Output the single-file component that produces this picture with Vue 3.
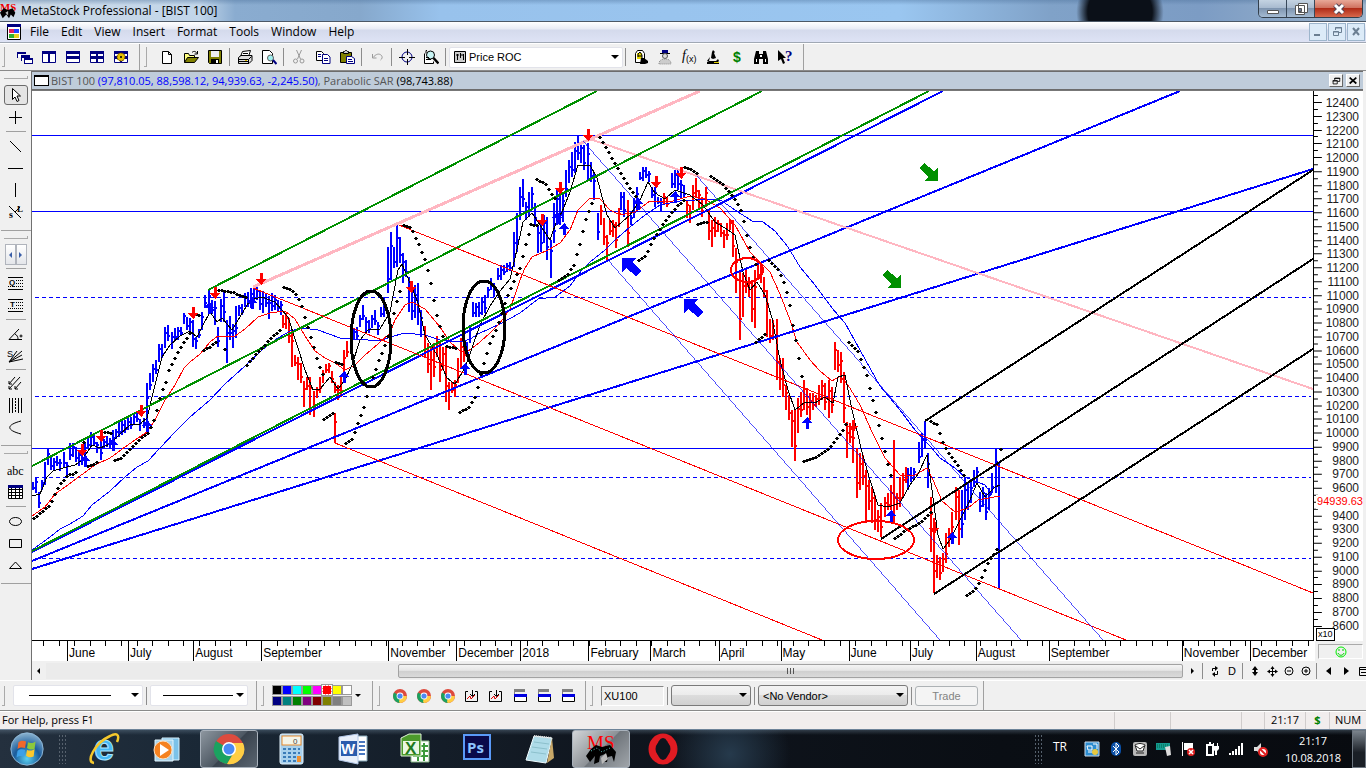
<script setup>
const menus = ['File', 'Edit', 'View', 'Insert', 'Format', 'Tools', 'Window', 'Help']

const win = (inner) => `<path fill="#fff" stroke="#000080" d="M1.5 2.5h13v11h-13z"/><path fill="#000080" d="M1 2h14v3H1z"/>${inner}`
const chrome = '<circle cx="8" cy="8" r="7" fill="#dd4b3e"/><path fill="#1aa260" d="M8 8 2 4.500A7 7 0 0 0 8 15z"/><path fill="#ffce44" d="M8 8h6.900A7 7 0 0 1 8 15l-1-1z"/><circle cx="8" cy="8" r="3.400" fill="#fff"/><circle cx="8" cy="8" r="2.600" fill="#4a8af4"/>'
const report = '<path fill="none" stroke="#000" d="M4 3.500H1.500v10h12v-10H11"/><path fill="none" stroke="#d00" d="m3 11 3-3 1 3 4-4"/><path stroke="#000" fill="none" d="M8.500 2v6M6 6l2.500 2.500L11 6"/>'
const layer = '<path fill="#808080" d="M2 1h11v3H2z"/><path fill="none" stroke="#808080" d="M2.500 3v5"/><path fill="#fff" stroke="#000" d="M2.500 6.500h12v7h-12z"/><path fill="#0000e0" d="M2 6h13v3H2z"/>'

const icons = {
  cascade: '<path fill="#000080" d="M0 3h9v2H0zM0 3h1v6H0zM4 6h9v3H4zM4 6h1v6H4zM7 9h9v6H7z"/><path fill="#fff" d="M8 11h7v3H8zM5 9h2v2H5zM1 5h3v3H1z"/>',
  cols: win('<path fill="#000080" d="M7 2h2v12H7z"/>'),
  rows: win('<path fill="#000080" d="M1 7h14v3H1z"/>'),
  tiles: win('<path fill="#000080" d="M7 2h2v12H7zM1 7h14v3H1z"/>'),
  gear: win('<path fill="#000080" d="M7 2h2v12H7zM1 7h14v3H1z"/><circle cx="8" cy="8" r="4" fill="#e8c000" stroke="#604000" stroke-dasharray="2 1"/><circle cx="8" cy="8" r="1" fill="#000"/>'),
  doc: '<path fill="#fff" stroke="#000" d="M3.500 2.500h6l3 3v9h-9zM9.500 2.500v3h3"/>',
  open: '<path fill="#ffff80" stroke="#000" d="M1.500 13.500v-9h4l1 2h5v2"/><path fill="#808000" stroke="#000" d="m1.500 13.500 3-5h11l-4 5z"/><path fill="none" stroke="#000" d="M9 3.500c2-2 4-1 5 1M14.500 2v3h-3"/>',
  save: '<path fill="#808000" stroke="#000" d="M1.500 1.500h13v13h-12l-1-1z"/><path fill="#eee" d="M4 2h8v6H4z"/><path fill="#000" d="M4 10h8v5H4z"/><path fill="#fff" d="M9 11h2v3H9z"/>',
  print: '<path fill="#fff" stroke="#000" d="m5.500 2.500 8-1-2 6h-8z"/><path stroke="#000" d="M6 4.500h5M5 6.500h5"/><path fill="#ddd" stroke="#000" d="M1.500 8.500 4 6.500h11v5l-3 3h-10.500z"/><path fill="none" stroke="#000" d="M1.500 10.500h10l3-3M11.500 10.500v4M2 12.500h9"/><path fill="#e0c000" d="M8 11h2v1H8z"/>',
  preview: '<path fill="#fff" stroke="#000" d="M1.500 1.500h7l3 3v10h-10z"/><circle cx="9.500" cy="9" r="3" fill="#a0f0f0" stroke="#606060"/><path stroke="#000080" stroke-width="2" d="m12 11 3.500 4"/>',
  cut: '<path fill="none" stroke="#999" d="m5.500 1 4 9M10.500 1l-4 9"/><circle cx="4.500" cy="12" r="2" fill="none" stroke="#999"/><circle cx="11" cy="12" r="2" fill="none" stroke="#999"/>',
  copy: '<path fill="#fff" stroke="#000" d="M1.500 2.500h5l2 2v7h-7z"/><path fill="#fff" stroke="#000080" d="M7.500 5.500h5l2.500 2.500v6.500H7.500z"/><path stroke="#000080" d="M9 9.500h4M9 11.500h4M3 5.500h3M3 7.500h3"/>',
  paste: '<path fill="#808000" stroke="#000" d="M1.500 3.500h11v10h-11z"/><path fill="#ccc" stroke="#000" d="M4.500 4.500v-2h1l1-1h1l1 1h1v2z"/><path fill="#fff" stroke="#000080" d="M7.500 7.500h5l3 2v5h-8z"/><path stroke="#000080" d="M9 10.500h4M9 12.500h5"/>',
  undo: '<path fill="none" stroke="#999" d="M3.500 5v4h4M4 8.500C7 5 10 4 12.500 6.500c1 1.500 1 3-1 4.500"/>',
  target: '<circle cx="8" cy="8" r="5" fill="none" stroke="#000080"/><path stroke="#000" stroke-width="1" d="M8.500 0v6M8.500 10v6M0 8.500h6M10 8.500h6"/>',
  zoomdoc: '<path fill="#fff" stroke="#000" d="M1.500 4.500v10h9v-2M4 1.500h-1v3"/><circle cx="7.500" cy="6" r="4" fill="#c8f4f4" stroke="#000"/><path stroke="#000" stroke-width="2.500" d="m10.500 9 5 5.500"/><path stroke="#000" d="M3 8.500h3M3 10.500h5"/>',
  expert: '<path fill="#fff" stroke="#000" d="M2.500 13.500v-9l2-3h5l2 3v9z"/><path fill="#e8d800" d="M4 4h5v6H4z"/><path fill="none" stroke="#000" d="M5 8V5l2-2 2 3v3M5 7h4"/><path fill="#000" d="M8 9h3l4 3v2l-3 1H7z"/>',
  advisor: '<path fill="#000080" d="M5 1h6v3H5z"/><path fill="#000" d="M3 4h10v1H3z"/><circle cx="8" cy="7" r="2.500" fill="#ddd" stroke="#555"/><path fill="#ccc" stroke="#888" stroke-dasharray="1 1" d="M2 15c0-4 3-5 6-5s6 1 6 5z"/>',
  fx: '<text x="1" y="11" font-family="Liberation Serif, serif" font-style="italic" font-size="14" fill="#000">f</text><text x="5" y="13" font-family="Liberation Sans, sans-serif" font-size="9" fill="#000">(x)</text>',
  scope: '<path fill="#000" d="m8 1 2 2-1 1 2 5-3 1-2-1 1-6zM5 8l-3 4h9l2-2 1 2-2 2h2v1H2v-2l2-1z"/><path fill="#e0d000" d="M9 13h5v1H9z"/>',
  dollar: '<text x="4" y="13" font-family="Liberation Sans, sans-serif" font-weight="bold" font-size="14" fill="#008000">$</text>',
  binoc: '<path fill="#000" d="M3 2h3v3h4V2h3l2 8v5h-5v-5H6v5H1v-5z"/><path fill="#fff" d="M3 10h1v3H3zM12 10h1v3h-1zM7 6h2v2H7z"/>',
  help: '<path fill="#000" d="m1 1 8 8H6l2 5-2 1-2-5-3 2z"/><text x="8" y="12" font-family="Liberation Serif, serif" font-weight="bold" font-size="15" fill="#000080">?</text>',
  pointer: '<path fill="#fff" stroke="#000" d="M5.500 1.500v11l2.500-2.500 2 4.500 2-1-2-4.500h3.500z"/>',
  cross: '<path stroke="#000" d="M8.500 2v13M2 8.500h13"/>',
  diag: '<path stroke="#000" d="m3 3 11 11"/>',
  hline: '<path stroke="#000" d="M1 8.500h15"/>',
  vline: '<path stroke="#000" d="M8.500 1v14"/>',
  sl: '<path stroke="#000" d="m2 2 12 12M13 3 8 8"/><text x="2" y="14" font-family="Liberation Serif, serif" font-weight="bold" font-size="10">s</text><text x="10" y="8" font-family="Liberation Serif, serif" font-weight="bold" font-size="9">L</text>',
  quad: '<path stroke="#000" d="M1 2.500h15M1 14.500h15"/><path stroke="#000" stroke-dasharray="1 1" d="M9 5.500h7M9 8.500h7M1 11.500h15"/><text x="2" y="10" font-family="Liberation Sans, sans-serif" font-weight="bold" font-size="8">Q</text>',
  tline: '<path stroke="#000" d="M1 2.500h15M1 14.500h15"/><path stroke="#000" stroke-dasharray="1 1" d="M9 5.500h7M9 8.500h7M1 11.500h15"/><text x="3" y="10" font-family="Liberation Sans, sans-serif" font-weight="bold" font-size="8">T</text>',
  angle: '<path fill="none" stroke="#000" d="M12 3 2 13.500h13M8 8c2 1 3 3 3 5"/><circle cx="14" cy="10" r="1" fill="none" stroke="#000"/>',
  fan: '<path fill="none" stroke="#000" d="M2 14 15 3M2 14l13-7M2 14l14-3M2 14l8-11"/><text x="0" y="9" font-family="Liberation Sans, sans-serif" font-size="9">S</text>',
  pitch: '<path fill="none" stroke="#000" d="m2 9 6-7M2 14 13 2M8 14l6-7"/><path fill="none" stroke="#000" d="M2 6v3h3M2 11v3h3M8 11v3h3"/>',
  bars: '<path stroke="#000" d="M2.500 1v15M5.500 1v15M11.500 1v15M14.500 1v15"/><path stroke="#000" stroke-dasharray="2 1" d="M8.500 1v15"/>',
  arc: '<path fill="none" stroke="#000" d="M14 2C-1 6-1 11 14 15"/>',
  abc: '<text x="0" y="13" font-family="Liberation Serif, serif" font-size="12">abc</text>',
  grid: '<path fill="#fff" stroke="#000" d="M1.500 1.500h14v13h-14zM1 5.500h15M1 8.500h15M1 11.500h15M4.500 2v13M8.500 2v13M12.500 2v13"/><path fill="#000080" d="M1 1h15v3H1z"/>',
  oval: '<ellipse cx="8.500" cy="8.500" rx="6" ry="4" fill="none" stroke="#000"/>',
  rect: '<path fill="none" stroke="#000" d="M2.500 4.500h12v8h-12z"/>',
  tri: '<path fill="none" stroke="#000" d="m8.500 5 6 6.500h-12z"/>',
  chrome, report, layer,
  refresh: '<path fill="none" stroke="#000" d="M5.500 8V5.500H9M10.500 8v3.500H7"/><path d="M8 3v5l3-3zM8 9v5l-3-3z"/>',
  day: '<text x="4" y="12" font-family="Liberation Sans, sans-serif" font-size="11">D</text>',
  updown: '<path d="m8 3 3 4H9v2h2l-3 4-3-4h2V7H5z"/>',
  move: '<path stroke="#000" d="M8.500 4v9M4 8.500h9"/><path d="M8.500 3l2 3h-4zM8.500 14l2-3h-4zM3 8.500l3-2v4zM14 8.500l-3-2v4z"/>',
  minus: '<circle cx="8" cy="8" r="4" fill="none" stroke="#000"/><path stroke="#000" d="M6 8h4"/>',
  plus: '<circle cx="8" cy="8" r="4" fill="none" stroke="#000"/><path stroke="#000" d="M6 8h4M8 6v4"/>',
  prev: '<path d="M10 4v8L5 8z"/>',
  next: '<path d="M6 4v8l5-4z"/>',
  pane: '<path fill="none" stroke="#000" d="M4.500 4.500h9v8h-9zM4 6.500h9M6 9.500h5"/>',
}

const toolbar = [
  ['print', 'preview'], ['cut', 'copy', 'paste'], ['undo'], ['target', 'zoomdoc'],
]
const analysis = ['expert', 'advisor', 'fx', 'scope', 'dollar', 'binoc', 'help']
const swatches = ['#000', '#00f', '#0ff', '#0f0', '#f0f', '#f00', '#ff0', '#fff', '#000080', '#008080', '#008000', '#800080', '#800000', '#808000', '#808080', '#c0c0c0']
const macros = ['chrome', 'chrome', 'chrome', 'report', 'report', 'layer', 'layer', 'layer']

const prices = Array.from({ length: 39 }, (_, i) => 12400 - i * 100)
const priceTop = 102
const priceStep = 1375 / 100
const months = [
  ['', 35], ['June', 61], ['July', 65], ['August', 68], ['September', 127], ['November', 68], ['December', 64], ['2018', 68],
  ['February', 62], ['March', 68], ['April', 62], ['May', 68], ['June', 61], ['July', 66], ['August', 73], ['September', 133], ['November', 68], ['December', 65],
]
const weekTicks = Array.from({ length: 82 }, (_, i) => 43 + Math.round(i * 15.6)).filter((x) => x < 1313)

const levels = [135, 211, 448]
const dashed = [297, 396, 477, 558]
const trends = [
  ['#00f', 2, 32, 552, 943, 91], ['#00f', 2, 32, 561, 1180, 91], ['#00f', 2, 32, 569, 1313, 169],
  ['#ffb6c1', 3, 253, 287, 700, 91], ['#ffb6c1', 2, 590, 139, 1313, 389],
  ['#009000', 2, 208, 290, 597, 91], ['#009000', 2, 32, 466, 762, 91], ['#009000', 2, 32, 551, 929, 91],
  ['#f00', 1, 253, 288, 1126, 640], ['#f00', 1, 399, 225, 1313, 593], ['#f00', 1, 335, 443, 822, 640],
  ['#00f', 0.7, 583, 141, 1021, 640], ['#00f', 0.7, 608, 260, 940, 640], ['#00f', 0.7, 697, 176, 1103, 640],
  ['#000', 2, 925, 421, 1313, 170], ['#000', 2, 881, 539, 1313, 259], ['#000', 2, 934, 594, 1313, 349],
]

const longAvg = '32,550 50,537 60,529 70,524 83,516 92,505 110,491 125,477 137,467 148,461 160,448 175,432 190,417 210,400 225,384 245,366 262,350 275,340 290,331 302,328 318,330 340,338 355,339 380,341 390,337 405,333 425,335 440,340 460,342 470,339 480,333 500,324 520,313 538,299 555,297 570,286 582,270 590,262 605,250 615,240 630,227 645,215 660,205 680,201 710,199 722,201 735,210 752,221 763,222 775,231 788,247 800,267 815,285 832,308 845,323 860,350 880,386 900,410 915,430 930,446 940,458 955,468 965,477 985,485 992,495'
const midAvg = '32,516 45,507 55,494 65,487 80,476 95,465 110,458 125,447 135,440 147,432 155,420 165,400 175,385 184,368 190,362 200,354 210,342 218,336 235,336 245,329 258,317 270,313 285,311 295,319 305,336 315,351 325,358 335,363 345,370 355,365 365,355 378,344 390,333 395,320 405,305 412,302 425,309 440,327 450,342 460,351 467,352 480,342 490,333 500,323 510,309 515,295 520,280 525,268 532,257 548,250 560,243 570,230 578,210 590,198 600,199 610,210 620,215 635,212 650,201 670,202 690,196 705,199 720,208 735,225 750,252 760,262 770,272 780,294 790,320 797,342 810,360 820,371 832,381 840,376 848,385 860,405 872,432 885,458 900,475 915,475 927,468 933,480 942,501 955,512 968,508 978,500 1000,496'
const shortAvg = '32,496 40,494 47,477 53,471 63,468 75,465 82,460 92,445 100,448 110,444 120,434 130,425 140,424 147,418 155,385 162,357 170,345 180,336 190,331 197,337 203,325 210,312 217,322 222,318 232,330 240,317 250,300 262,297 275,302 288,317 297,345 305,370 313,390 320,389 330,377 338,389 345,380 352,365 360,340 368,330 380,329 390,312 398,270 402,264 410,283 418,303 425,335 437,355 447,378 455,384 465,368 480,325 490,306 500,291 510,279 518,245 523,222 532,213 540,225 550,240 557,220 562,212 570,192 578,165 590,165 597,178 607,215 615,228 622,222 630,215 640,200 648,182 655,193 665,199 675,190 690,195 703,205 715,222 728,230 735,235 743,272 750,290 757,282 765,295 772,318 780,360 788,390 795,410 805,402 815,403 825,397 833,403 838,377 845,375 852,410 862,452 870,480 878,505 888,507 900,503 910,485 918,474 927,455 932,490 938,535 943,549 950,540 960,520 970,500 977,483 985,497 995,487 1000,485'

const upBars = `33,482,490 36,477,493 39,492,508 42,480,490 45,462,485 48,449,465 51,457,470 54,458,470 57,456,466 60,459,471 64,452,467 67,462,475 70,443,460 73,443,457 76,447,462 79,450,466 82,447,465 85,443,458 88,437,448 91,432,447 94,435,446 97,442,453 101,436,460 104,439,449 107,436,447 110,438,448 113,430,442 116,429,439 119,420,437 122,421,435 125,420,433 128,418,430 131,417,429 134,413,425 137,412,422 140,419,431 144,418,428 147,383,432 150,373,390 153,364,382 156,360,374 159,344,362 162,344,358 165,327,348 168,325,341 172,332,349 175,328,341 178,327,340 181,327,336 184,313,324 187,317,330 190,318,332 193,320,347 196,337,349 199,329,338 202,312,330 205,295,307 209,290,310 212,300,314 215,301,325 218,327,347 221,299,322 224,290,322 227,320,363 230,316,340 233,324,348 236,306,338 239,305,316 242,304,315 245,293,307 248,292,307 251,288,308 254,287,302 257,287,300 260,291,310 263,291,313 266,293,307 269,296,319 272,293,311 275,295,310 278,300,312 281,301,315
351,333,347 354,328,340 357,327,340 360,315,327 363,305,320 366,317,332 369,320,333 372,315,328 375,310,325 378,322,335 381,307,317 384,297,317 388,247,293 391,232,280 394,247,268 397,225,267 400,237,263 403,253,283 406,260,277 409,277,312 412,290,320 415,285,318 418,283,325 421,310,337
467,342,357 470,325,343 473,302,317 476,303,317 479,302,317 482,297,315 485,295,313 488,287,298 491,278,290 494,283,297 498,268,280 501,265,280 504,265,275 507,263,272 510,262,271 514,232,267 517,213,252 520,187,220 523,179,207 526,202,220 529,192,217 532,187,210 535,203,225 538,225,253 541,223,252 544,215,243 547,217,260 551,240,278 554,203,243 557,188,225 560,193,225 563,192,222 566,170,197 569,160,183 572,152,177 575,142,173 578,136,160 581,142,163 584,145,170 588,143,180 591,162,182 594,173,200 598,213,240 621,192,210 624,192,217 631,215,225 634,198,218 637,187,210 640,172,180 643,167,181 646,167,178 649,171,182 652,187,198 655,187,207 658,197,204 661,198,212 672,173,188 675,170,188 678,170,190 681,180,198 684,185,198
908,468,490 911,467,482 914,468,480 919,442,463 922,433,457 925,421,448 928,453,488 962,490,538 965,477,520 968,483,510 971,482,503 974,470,487 977,467,485 980,492,512 983,487,507 986,493,520 989,488,510 992,473,493 996,449,493 999,463,588`
const downBars = `283,315,328 286,313,329 289,318,343 292,330,367 295,355,366 298,357,380 301,363,383 304,381,407 307,377,390 310,377,415 314,391,417 317,387,398 320,377,393 323,370,383 326,364,373 329,363,373 332,371,383 335,413,443 335,382,393 338,385,400 341,377,397 344,350,377 347,341,357 425,326,358 428,343,373 431,347,390 434,343,377 437,336,357 440,342,382 443,347,370 446,347,402 449,382,410 452,382,393 455,380,397 458,358,383 461,338,368 464,340,362 601,205,225 604,218,245 607,235,262 610,220,235 613,220,237 616,222,248 619,208,227 628,200,247 664,193,205 667,197,207 687,200,218 690,205,223 693,185,210 696,178,197 699,190,208 702,197,217 706,187,207 709,210,240 712,220,247 715,217,237 718,220,232 721,223,237 724,230,248 727,223,240 730,220,230 733,220,257 736,248,293 740,270,340 743,273,317 746,270,293 749,277,297 752,280,322 755,270,328 758,262,280 761,262,283 764,277,297 767,290,337 770,319,343 773,320,340 777,319,380 780,358,390 783,358,397 786,385,410 789,395,420 792,410,447 795,410,461 798,398,433 801,392,417 804,380,410 807,388,415 810,393,420 813,393,410 816,395,407 819,385,405 822,380,400 825,383,410 829,380,418 832,387,413 835,342,370 838,350,372 841,352,383 844,372,423 847,422,458 850,423,443 853,427,463 857,448,498 860,453,490 863,455,485 866,470,522 869,480,510 872,487,523 875,495,530 878,510,532 881,503,537 885,497,517 888,493,510 891,485,510 894,440,523 897,493,510 900,477,507 903,473,497 906,467,483 931,497,552 934,518,593 937,555,578 940,557,580 943,553,572 946,533,563 949,528,547 952,512,533 956,487,520 959,490,545`
const barPath = (text) => text.trim().split(/\s+/).map((bar, i) => {
  const [x, top, bottom] = bar.split(',').map(Number)
  const close = Math.round(top + (bottom - top) * (i % 2 ? 0.3 : 0.7))
  return `M${x} ${top}V${bottom}M${x} ${close}h2`
}).join('')
const upPath = barPath(upBars)
const downPath = barPath(downBars)

const sarRuns = [
  '33,518 42,511 49,505 55,492 60,483 68,474 73,474 77,469', '83,442 84,442', '87,466 92,465 98,461', '104,432 112,433',
  '114,460 120,458 130,448 140,438 148,432 154,418 160,394 166,379 168,370 173,360 178,350 185,339 190,332', '195,314 200,315', '203,350 210,346 216,341', '224,349 225,349',
  '218,290 232,292 245,297', '246,365 255,354 262,347 270,338 281,328', '283,287 290,289 296,295 300,303 305,320 311,340 318,365 322,374', '323,419 333,412', '335,362 343,365',
  '345,443 352,438 358,420 364,404 367,392 372,377 378,360 386,340 390,325 395,305 400,287', '403,225 410,227 418,244 424,259 429,277 435,312 442,336', '446,346 455,348 457,360',
  '459,412 468,407 475,395 482,366 489,343 497,325 505,300 512,283 519,268 526,240 528,234', '530,224 536,225', '536,179 545,184 555,200',
  '558,280 566,275 573,265 580,240 584,222 590,205 593,198', '599,137 607,150 615,165 622,176 630,190 637,198', '638,260 645,255 652,240 660,227 668,216 677,205 683,200', '684,167 692,170 697,174', '697,224 708,221',
  '710,176 722,184 735,200 741,212 747,240 751,254 755,264', '755,342 765,333', '768,260 778,270 784,284 789,305 792,325 796,345 800,370 803,388',
  '803,461 815,457 828,448 837,437 843,428 846,422', '848,342 857,351 866,375 872,400 877,420 882,443 888,468 892,481', '894,538 905,530 920,522 930,512',
  '930,421 936,424 943,445 950,456 958,466 964,477', '966,595 974,590 981,577 987,563 992,555 998,546', '1000,449 1001,449',
]
const sarPath = sarRuns.map((run) => {
  const pts = run.split(' ').map((p) => p.split(',').map(Number))
  let out = ''
  for (let x = pts[0][0], k = 0; x <= pts[pts.length - 1][0]; x += 3) {
    while (k < pts.length - 2 && pts[k + 1][0] < x) k++
    const [[ax, ay], [bx, by]] = [pts[k], pts[k + 1]]
    const y = Math.round(ay + ((by - ay) * (x - ax)) / (bx - ax))
    out += `M${x - 1} ${y}h4v1h-4zM${x} ${y - 1}h2v3h-2z`
  }
  return out
}).join('')

const sells = [[193, 313], [215, 293], [82, 450], [101, 436], [141, 411], [261, 279], [411, 287], [542, 220], [560, 188], [588, 135], [656, 182], [681, 173], [853, 426], [934, 528]]
const buys = [[85, 461], [113, 445], [147, 426], [209, 308], [252, 303], [344, 377], [465, 369], [564, 229], [557, 218], [638, 204], [675, 197], [807, 423], [891, 516], [952, 538]]
const signs = [['#00f', 631, 267, 0], ['#00f', 693, 308, 0], ['#009000', 929, 172, 180], ['#009000', 892, 279, 180]]
const loops = [['#000', 3, 371, 339, 20, 48], ['#000', 3, 484, 327, 21, 46], ['#f00', 2, 747, 270, 16, 12], ['#f00', 2, 876, 540, 38, 19]]

const tasks = [
  { name: 'Internet Explorer', art: '<text x="5" y="27" font-family="Liberation Sans, sans-serif" font-weight="bold" font-size="36" fill="#47b8f5" stroke="#a8e4ff">e</text><path fill="none" stroke="#f6c82c" stroke-width="2.500" d="M5 30C-4 29 6 10 21 3c7-4 10-1 7 6"/>' },
  { name: 'Media Player', art: '<path fill="#7cc2e8" stroke="#d8f0fc" d="M11 5h17v22H11z"/><path fill="#a4d4ee" stroke="#e4f5fd" d="M4 7h18v21H4z"/><circle cx="12" cy="17" r="9" fill="#f58220" stroke="#fde0c0"/><path fill="#fff" d="m9 11 9 6-9 6z"/>' },
  { name: 'Chrome', active: true, art: '<circle cx="16" cy="16" r="15" fill="#dd4b3e"/><path fill="#1aa260" d="M16 16 3 8a15 15 0 0 0 11 23l6-10z"/><path fill="#ffce44" d="M16 10h14a15 15 0 0 1-16 21l6-10z"/><circle cx="16" cy="16" r="7" fill="#fff"/><circle cx="16" cy="16" r="5.500" fill="#4a8af4"/>' },
  { name: 'Calculator', art: '<rect x="5" y="1" width="23" height="30" rx="2" fill="#a8d0ec" stroke="#e4f4ff"/><rect x="7" y="3" width="19" height="9" fill="#f4f4e8" stroke="#e88a2c"/><text x="18" y="11" font-family="Liberation Sans, sans-serif" font-size="8" fill="#444">0</text><path stroke="#3b7cb8" stroke-width="2" stroke-dasharray="3 2" d="M8 16h17M8 20h17M8 24h17M8 28h17"/><path fill="#f09030" d="M22 23h4v6h-4z"/>' },
  { name: 'Word', art: '<path fill="#fff" stroke="#8ab" d="M12 3h18v25H12z"/><path stroke="#4a78c0" stroke-width="2" d="M22 9h6M22 13h6M22 17h6M22 21h6"/><path fill="#e8effa" stroke="#b4c8e8" d="m2 4 19-3v30L2 27z"/><path fill="#2b5cad" d="M4 8h16v15H4z"/><text x="4" y="21" font-family="Liberation Sans, sans-serif" font-weight="bold" font-size="15" fill="#fff">W</text>' },
  { name: 'Excel', art: '<path fill="#fff" stroke="#8b8" d="M12 8h18v21H12z"/><path fill="none" stroke="#3c9a3c" stroke-width="2" d="M14 13h15M14 18h15M14 23h15M19 10v18M25 10v18"/><path fill="#4c9a2c" stroke="#e0f4d8" d="M2 5 10 1h12v22H2z"/><path fill="#e9f7e2" d="M4 8h16v13H4z"/><text x="6" y="21" font-family="Liberation Sans, sans-serif" font-weight="bold" font-size="17" fill="#1f7a1f">X</text>' },
  { name: 'Photoshop', art: '<path fill="#0a0a4a" stroke="#5a9af8" stroke-width="2" d="M3 2h26v24H3z"/><text x="6" y="20" font-family="Open Sans, sans-serif" font-weight="bold" font-size="15" fill="#8cc4ff">Ps</text>' },
  { name: 'Notepad', art: '<path fill="#aedbe8" stroke="#f0fcff" d="m11 3 18 2-6 25-20-3z"/><path stroke="#8cc0cc" d="m11 9 15 2M9 14l15 2M8 19l15 2"/><path fill="#c8a868" d="m29 5 2 20-7 5z"/><path stroke="#ddd" stroke-width="2" stroke-dasharray="1 1" d="m11 3 18 2"/>' },
  { name: 'MetaStock', active: true, art: '<text x="2" y="16" font-family="Liberation Serif, serif" font-size="19" fill="#f00">MS</text><path fill="#000" d="m1 23 5-7 5-4 6 2 8-2 6 7-2 10-2-6-4 1-1 5h-4l2-8-5 2-1 6-5 2 1-8-5 6z"/><path fill="#bbb" d="m16 25 5-5 2 6-6 5z"/><path fill="none" stroke="#6cc" stroke-dasharray="1 2" d="m6 18 6-3 5 4 8-4"/>' },
  { name: 'Opera', art: '<ellipse cx="16" cy="16" rx="11" ry="12" fill="none" stroke="#e01b22" stroke-width="7"/><ellipse cx="16" cy="16" rx="6" ry="11" fill="#0e141d"/>' },
]
const tray = [
  '<path fill="#2c8cd0" stroke="#cde" d="M1 1h14v14H1z"/><path fill="none" stroke="#fff" d="M3 5h5v4H4zM9 3h4v5M4 11h6"/><circle cx="11" cy="11" r="3" fill="#e8c840"/>',
  '<rect x="3" y="1" width="10" height="14" rx="5" fill="#0a50a8"/><path fill="none" stroke="#fff" d="m5 5 6 6-3 3V2l3 3-6 6"/>',
  '<rect x="1" y="1" width="14" height="14" rx="2" fill="#b8b8b8"/><path fill="#fff" stroke="#222" d="M3 4c4-2 6-2 10 0l-2 6H5z"/><path fill="none" stroke="#222" d="m4 5 4 3 4-3M4 12h8"/>',
  '<path fill="#159a90" d="M0 2h14v7H0z"/><path stroke="#064" stroke-dasharray="1 1" d="M1 4h12M1 6h12"/><path fill="#ddd" d="m9 6 5-1 1 9-4 1z"/>',
  '<path fill="#fff" d="M2 1h1v14H2zM4 2h9v7H4z"/><circle cx="11" cy="11" r="4" fill="#e02020"/><path stroke="#fff" stroke-width="1.500" d="m9 9 4 4M13 9l-4 4"/>',
  '<path fill="none" stroke="#fff" stroke-width="2" d="M3 4h6v10H3zM5 2h2"/><path fill="#fff" d="M8 5h7v3l-2 2v4h-2v-4L8 8zM9 2h1v3H9zM13 2h1v3h-1z"/>',
  '<path fill="#fff" d="M1 12h2v2H1zM4 10h2v4H4zM7 8h2v6H7zM10 5h2v9h-2zM13 2h2v12h-2z"/>',
  '<path fill="#ddd" d="M2 6h3l4-4v12l-4-4H2z"/><circle cx="11" cy="11" r="4" fill="#fff" stroke="#e02020" stroke-width="2"/><path stroke="#e02020" stroke-width="2" d="m8 8 6 6"/>',
]
</script>

<template>
  <main class="desktop">
    <header class="title">
      <svg class="logo" viewBox="0 0 20 20"><text x="0" y="10" font-family="Liberation Serif, serif" font-weight="bold" font-size="12" fill="#e00">MS</text><path d="m0 12 4-5 5 2 5-2 3 5-2 5-3-3-2 4-3-4-4 4z" /><path fill="#bbb" d="m6 12 3-2v5z" /></svg>
      <h1>MetaStock Professional - [BIST 100]</h1>
      <div class="caption">
        <button aria-label="Minimize"><svg viewBox="0 0 16 14"><path fill="#fff" stroke="#555" d="M2.500 8.500h11v3h-11z" /></svg></button>
        <button aria-label="Restore"><svg viewBox="0 0 16 14"><path fill="#fff" stroke="#555" d="M5.500 1.500h9v9h-9zM2.500 3.500h9v9h-9z" /><path fill="#679" stroke="#555" d="M5.500 6.500h3v3h-3z" /></svg></button>
        <button class="close" aria-label="Close"><svg viewBox="0 0 16 14"><path stroke="#545" stroke-width="5" d="m4 3 8 8M12 3l-8 8" /><path stroke="#fff" stroke-width="3" d="m4 3 8 8M12 3l-8 8" /></svg></button>
      </div>
    </header>

    <nav class="menu">
      <svg class="menuicon" viewBox="0 0 16 16"><path fill="#fff" stroke="#000" d="M1.500 0.500h13v15h-13z" /><path fill="#000080" d="M1 0h14v3H1z" /><path fill="#e02060" d="M3 5h5v4H3z" /><path fill="#2040ff" d="M8 5h5v4H8z" /><path fill="#30b030" d="M3 10h5v4H3z" /><path fill="#e8d020" d="M8 10h5v4H8z" /></svg>
      <button v-for="m in menus" :key="m">{{ m }}</button>
      <span class="mdi">
        <button aria-label="Minimize chart"><svg viewBox="0 0 12 12"><path fill="#6b7f92" d="M2 8h6v2H2z" /></svg></button>
        <button aria-label="Restore chart"><svg viewBox="0 0 12 12"><path fill="none" stroke="#6b7f92" d="M4.500 4V1.500h6v5H8M2.500 5.500h5v4h-5zM2 6h6M4 2h7" /></svg></button>
        <button aria-label="Close chart"><svg viewBox="0 0 12 12"><path stroke="#6b7f92" stroke-width="2" d="m3 2 6 7M9 2 3 9" /></svg></button>
      </span>
    </nav>

    <div class="tools top">
      <i class="grip"></i>
      <button v-for="n in ['cascade', 'cols', 'rows', 'tiles', 'gear']" :key="n" :aria-label="n"><svg viewBox="0 0 16 16" v-html="icons[n]"></svg></button>
      <i class="end"></i><i class="grip"></i>
      <button v-for="n in ['doc', 'open', 'save']" :key="n" :aria-label="n"><svg viewBox="0 0 16 16" v-html="icons[n]"></svg></button>
      <template v-for="(g, gi) in toolbar" :key="gi">
        <i class="sep"></i>
        <button v-for="n in g" :key="n" :aria-label="n"><svg viewBox="0 0 16 16" v-html="icons[n]"></svg></button>
      </template>
      <i class="sep"></i>
      <div class="drop indicator">
        <svg class="mini" viewBox="0 0 14 14"><path fill="#ccc" stroke="#000" d="M1.500 1.500h11v11h-11z" /><path stroke="#000" d="M4.500 4v6M7.500 3v5M10.500 4v6M3 5h3M8 5h2" /></svg>
        <select aria-label="Indicator"><option>Price ROC</option></select>
        <svg class="caret" viewBox="0 0 8 5"><path d="M0 0h8L4 4z" /></svg>
      </div>
      <i class="sep"></i>
      <button v-for="n in analysis" :key="n" :aria-label="n"><svg viewBox="0 0 16 16" v-html="icons[n]"></svg></button>
      <i class="end"></i>
    </div>

    <div class="work">
      <aside>
        <i class="hgrip"></i>
        <button class="pressed" aria-label="pointer"><svg viewBox="0 0 17 17" v-html="icons.pointer"></svg></button>
        <button aria-label="cross"><svg viewBox="0 0 17 17" v-html="icons.cross"></svg></button>
        <i class="hsep"></i>
        <button v-for="n in ['diag', 'hline', 'vline', 'sl']" :key="n" :aria-label="n"><svg viewBox="0 0 17 17" v-html="icons[n]"></svg></button>
        <i class="hend"></i><i class="hgrip"></i>
        <div class="pair"><button aria-label="Back"><svg viewBox="0 0 8 10"><path fill="#3a5fa8" d="M6 2v6L3 5z" /></svg></button><button aria-label="Forward"><svg viewBox="0 0 8 10"><path fill="#3a5fa8" d="M2 2v6l3-3z" /></svg></button></div>
        <i class="hsep"></i>
        <button v-for="n in ['quad', 'tline']" :key="n" :aria-label="n"><svg viewBox="0 0 17 17" v-html="icons[n]"></svg></button>
        <i class="hsep"></i>
        <button v-for="n in ['angle', 'fan']" :key="n" :aria-label="n"><svg viewBox="0 0 17 17" v-html="icons[n]"></svg></button>
        <i class="hsep tight"></i>
        <button v-for="n in ['pitch', 'bars', 'arc']" :key="n" :aria-label="n"><svg viewBox="0 0 17 17" v-html="icons[n]"></svg></button>
        <i class="hend"></i><i class="hgrip"></i>
        <button v-for="n in ['abc', 'grid']" :key="n" :aria-label="n"><svg viewBox="0 0 17 17" v-html="icons[n]"></svg></button>
        <i class="hsep"></i>
        <button v-for="n in ['oval', 'rect', 'tri']" :key="n" :aria-label="n"><svg viewBox="0 0 17 17" v-html="icons[n]"></svg></button>
        <i class="hend"></i>
      </aside>

      <section class="chartwin">
        <div class="charthead">
          <i class="box"></i>
          <p>BIST 100 <b>(97,810.05, 88,598.12, 94,939.63, -2,245.50)</b>, Parabolic SAR <em>(98,743.88)</em></p>
          <button aria-label="Restore pane"><svg viewBox="0 0 12 12"><path fill="none" stroke="#000" d="M4.500 5V2.500h6v4H8M2.500 5.500h5v4h-5zM2 6h6M4 3h7" /></svg></button>
          <button aria-label="Close pane"><svg viewBox="0 0 12 12"><path stroke="#000" stroke-width="2" d="m2 2 8 7M10 2 2 9" /></svg></button>
        </div>
        <div class="plotrow">
          <svg class="plot" viewBox="32 91 1282 549" preserveAspectRatio="none" shape-rendering="crispEdges" fill="none">
            <path v-for="y in levels" :key="y" :d="`M32 ${y}.5H1313`" stroke="#00f" />
            <path v-for="y in dashed" :key="y" :d="`M35 ${y}.5H1311`" stroke="#00f" stroke-dasharray="4 3" />
            <path :d="upPath" stroke="#00f" stroke-width="2" />
            <path :d="downPath" stroke="#f00" stroke-width="2" />
            <polyline :points="longAvg" stroke="#00f" />
            <polyline :points="midAvg" stroke="#f00" />
            <polyline :points="shortAvg" stroke="#000" />
            <line v-for="(t, i) in trends" :key="i" :stroke="t[0]" :stroke-width="t[1]" :x1="t[2]" :y1="t[3]" :x2="t[4]" :y2="t[5]" />
            <path :d="sarPath" fill="#000" />
            <ellipse v-for="(l, i) in loops" :key="i" :stroke="l[0]" :stroke-width="l[1]" :cx="l[2]" :cy="l[3]" :rx="l[4]" :ry="l[5]" />
            <path v-for="(s, i) in sells" :key="i" :transform="`translate(${s[0]} ${s[1]})`" fill="#f00" d="M-1-6h3v6h3L0.500 6-5 1V0h4z" />
            <path v-for="(s, i) in buys" :key="i" :transform="`translate(${s[0]} ${s[1]})`" fill="#00f" d="M-1 6h3v-6h3L0.500-6-5-1V0h4z" />
            <path v-for="(s, i) in signs" :key="i" :transform="`translate(${s[1]} ${s[2]}) rotate(${s[3]})`" :fill="s[0]" d="M-9-9H5L1-5 10 4 5 9-5 1l-4 4z" />
            <path stroke="#000" d="M1313.500 91V640" />
          </svg>
          <div class="prices">
            <svg viewBox="1314 91 50 549" preserveAspectRatio="none" shape-rendering="crispEdges">
              <template v-for="(p, i) in prices" :key="p">
                <path stroke="#000" :d="`M1314 ${Math.round(priceTop + i * priceStep)}.5h8M1314 ${Math.round(priceTop + (i - 0.5) * priceStep)}.5h4`" />
              </template>
            </svg>
            <ol><li v-for="p in prices" :key="p" :class="{ last: p === 9500 }">{{ p === 9500 ? '94939.63' : p }}</li></ol>
            <span class="mult">x10</span>
          </div>
        </div>
        <div class="daterow">
          <div class="dates">
            <svg viewBox="32 0 1282 6" preserveAspectRatio="none" shape-rendering="crispEdges"><path v-for="x in weekTicks" :key="x" stroke="#000" :d="`M${x}.5 0v5`" /></svg>
            <span v-for="(m, i) in months" :key="i" :style="{ flexGrow: m[1] }">{{ m[0] }}</span>
          </div>
          <div class="smile"><svg viewBox="0 0 12 12"><circle cx="6" cy="6" r="5" fill="none" stroke="#0e0" /><path fill="none" stroke="#0c0" d="M3 7c1 3 5 3 6 0M4 3v2M8 3v2" /></svg></div>
        </div>
        <div class="scroll">
          <button aria-label="Scroll left"><svg viewBox="0 0 8 8"><path d="M5 1v6L2 4z" /></svg></button>
          <div class="track"><div class="thumb"><i></i><i></i><i></i></div></div>
          <button aria-label="Scroll right"><svg viewBox="0 0 8 8"><path d="M3 1v6l3-3z" /></svg></button>
          <i class="sep"></i>
          <button v-for="n in ['refresh', 'day']" :key="n" :aria-label="n"><svg class="sm" viewBox="0 0 16 16" v-html="icons[n]"></svg></button>
          <i class="sep"></i>
          <button v-for="n in ['updown', 'move', 'minus', 'plus']" :key="n" :aria-label="n"><svg class="sm" viewBox="0 0 16 16" v-html="icons[n]"></svg></button>
          <i class="sep"></i>
          <button v-for="n in ['prev', 'next', 'pane']" :key="n" :aria-label="n"><svg class="sm" viewBox="0 0 16 16" v-html="icons[n]"></svg></button>
        </div>
      </section>
    </div>

    <div class="tools bottom">
      <i class="grip"></i>
      <div class="drop line1"><select aria-label="Line style"><option></option></select><svg class="rule" viewBox="0 0 80 2" preserveAspectRatio="none"><path d="M0 0h80v1H0z" /></svg><svg class="caret" viewBox="0 0 8 5"><path d="M0 0h8L4 4z" /></svg></div>
      <i class="sep"></i>
      <div class="drop line2"><select aria-label="Line weight"><option></option></select><svg class="rule" viewBox="0 0 80 2" preserveAspectRatio="none"><path d="M0 0h80v1H0z" /></svg><svg class="caret" viewBox="0 0 8 5"><path d="M0 0h8L4 4z" /></svg></div>
      <i class="end"></i><i class="grip"></i>
      <div class="palette"><button v-for="c in swatches" :key="c" :class="{ on: c === '#f00' }" :style="{ background: c }" :aria-label="c"></button></div>
      <button class="more" aria-label="More colours"><svg viewBox="0 0 8 5"><path d="M1 1h6L4 4z" /></svg></button>
      <i class="end"></i><i class="grip"></i>
      <button v-for="(n, i) in macros" :key="i" :aria-label="n"><svg viewBox="0 0 16 16" v-html="icons[n]"></svg></button>
      <i class="end near"></i><i class="grip"></i>
      <input class="symbol" aria-label="Symbol" value="XU100">
      <i class="sep"></i>
      <div class="drop glossy exch"><select aria-label="Exchange"><option></option></select><svg class="caret" viewBox="0 0 8 5"><path d="M0 0h8L4 4z" /></svg></div>
      <i class="sep"></i>
      <div class="drop glossy vendor"><select aria-label="Vendor"><option>&lt;No Vendor&gt;</option></select><svg class="caret" viewBox="0 0 8 5"><path d="M0 0h8L4 4z" /></svg></div>
      <i class="sep"></i>
      <button class="trade" disabled>Trade</button>
      <i class="end near"></i>
    </div>

    <footer class="status">
      <span class="msg">For Help, press F1</span>
      <span class="c1"></span><span class="c2"></span><span class="c3"></span><span class="c4">21:17</span><span class="c5">$</span><span class="c6">NUM</span>
    </footer>

    <div class="taskbar">
      <button class="orb" aria-label="Start">
        <svg viewBox="0 0 40 40"><defs><radialGradient id="orb" cx=".5" cy=".8" r=".8"><stop offset="0" stop-color="#5cd0f0" /><stop offset=".5" stop-color="#1a5c9c" /><stop offset="1" stop-color="#8cb4d0" /></radialGradient></defs><circle cx="20" cy="20" r="17" fill="url(#orb)" stroke="#8fb8d8" /><path fill="#f0682c" d="M11 13c3-2 5-2 8-1l-1 7c-3-1-5-1-8 1z" /><path fill="#8cc83c" d="M21 13c3 1 5 1 8-1l-1 8c-3 1-5 1-8-1z" /><path fill="#3ca0e8" d="M10 22c3-2 5-2 8-1l-1 7c-3-1-5-1-8 1z" /><path fill="#fcc82c" d="M20 21c3 1 5 1 8-1l-1 8c-3 1-5 1-8-1z" /></svg>
      </button>
      <i class="dots first"></i>
      <button v-for="t in tasks" :key="t.name" class="task" :class="{ active: t.active }" :aria-label="t.name"><svg viewBox="0 0 32 32" v-html="t.art"></svg></button>
      <div class="tray">
        <i class="dots"></i>
        <span class="lang">TR</span>
        <svg v-for="(t, i) in tray" :key="i" viewBox="0 0 16 16" v-html="t"></svg>
        <time>21:17<br>10.08.2018</time>
        <button class="peek" aria-label="Show desktop"></button>
      </div>
    </div>
  </main>
</template>

<style>
html, body { margin: 0; overflow: hidden; }
</style>

<style scoped>
.desktop { display: flex; flex-direction: column; height: 100vh; background: #f0f0f0; color: #000; font: 12px/16px "Noto Sans", "Open Sans", sans-serif; overflow: hidden; }
button, select, input { font: inherit; color: inherit; border: 0; padding: 0; margin: 0; background: none; border-radius: 0; box-sizing: border-box; }
svg { display: block; flex: none; }
i { display: block; flex: none; }

.title { display: flex; align-items: center; height: 22px; flex: none; box-sizing: border-box; border-bottom: 1px solid #4c5866; background: radial-gradient(ellipse 46px 44px at 1120px 12px, #0b1018 70%, transparent 95%), linear-gradient(#4a6f9966, #fff0 5px), linear-gradient(90deg, #ccd9e6, #c2d6ea 200px, #8aacd0 235px, #86a8cc 360px, #98c2ec 440px, #9ac6f0 900px, #80a2c8 1050px, #7c9cc4 1200px, #9cb4cc); }
.logo { width: 18px; height: 20px; }
.title h1 { flex: 1; margin: 0 0 0 3px; font: 12px/20px "Open Sans", sans-serif; }
.caption { display: flex; align-self: flex-start; margin-right: 3px; border: 1px solid #333f4c; border-top: 0; border-radius: 0 0 5px 5px; overflow: hidden; }
.caption button { width: 28px; height: 17px; display: grid; place-items: center; border-right: 1px solid #38485a; background: linear-gradient(#c4d3e2, #a9bbd0 45%, #7f95b0 50%, #a5bbd2); }
.caption .close { width: 47px; border: 0; background: linear-gradient(#e8a898, #d07260 45%, #b02c18 50%, #d8684c); }
.caption svg { width: 16px; height: 14px; }

.menu { display: flex; align-items: center; height: 20px; flex: none; background: linear-gradient(#fff, #e8ebf5 7px, #d4daec 8px, #dee3f5); border-bottom: 1px solid #a0a8b4; }
.menuicon { width: 16px; height: 16px; margin: 0 2px 0 6px; }
.menu > button { padding: 0 6px; height: 18px; font: 12px/18px "Open Sans", sans-serif; }
.mdi { display: flex; gap: 1px; margin-left: auto; margin-right: 1px; }
.mdi button { width: 18px; height: 18px; display: grid; place-items: center; border: 1px solid #9db5cc; background: #dcebf8; }
.mdi svg { width: 12px; height: 12px; }

.tools { display: flex; align-items: center; flex: none; box-sizing: border-box; background: #f0f0f0; border-top: 1px solid #fff; border-bottom: 1px solid #8a8a8a; }
.top { height: 28px; }
.tools > button { width: 24px; height: 22px; display: grid; place-items: center; flex: none; }
.tools > button svg { width: 16px; height: 16px; }
.grip { width: 3px; height: 20px; box-sizing: border-box; margin: 0 8px 0 2px; border: 1px solid #aaa; border-width: 0 1px 1px 0; }
.sep { width: 1px; height: 18px; margin: 0 3px 0 2px; background: #8c8c8c; }
.end { width: 1px; align-self: stretch; margin: 0 2px 0 6px; background: #a0a0a0; }
.drop { position: relative; display: flex; align-items: center; height: 21px; background: #fff; border: 1px solid #e2e3ea; border-radius: 2px; box-sizing: border-box; flex: none; }
.drop select { appearance: none; flex: 1; min-width: 0; height: 19px; padding: 0 16px 0 4px; font: 12px/16px "Liberation Sans", Arial, sans-serif; }
.drop .caret { position: absolute; right: 3px; width: 8px; height: 5px; pointer-events: none; }
.indicator { width: 174px; }
.mini { width: 14px; height: 14px; margin-left: 3px; }
.indicator select { padding-left: 2px; font-size: 11px; }

.work { display: flex; flex: 1; min-height: 0; }
aside { width: 31px; flex: none; display: flex; flex-direction: column; align-items: center; box-sizing: border-box; padding-top: 4px; }
aside > button { width: 24px; height: 22px; display: grid; place-items: center; flex: none; }
aside svg { width: 17px; height: 17px; }
aside .pressed { border: 1px solid #6b6b6b; border-radius: 3px; background: #e4e4e4; height: 20px; margin: 1px 0; }
.hgrip { width: 24px; height: 3px; box-sizing: border-box; border: 1px solid #aaa; border-width: 0 1px 1px 0; margin: 1px 0 5px; }
.hsep { width: 20px; height: 1px; background: #a0a0a0; margin: 3px 0; }
.tight { margin: 2px 0; }
.hend { width: 30px; height: 1px; background: #a0a0a0; margin: 7px 0 4px; }
.pair { display: flex; }
.pair button { width: 11px; height: 21px; display: grid; place-items: center; border: 1px solid #b0b4bc; background: linear-gradient(#fff, #e4e6ea); }
.pair svg { width: 8px; height: 10px; }

.chartwin { flex: 1; min-width: 0; display: flex; flex-direction: column; border-left: 1px solid #707070; overflow: hidden; }
.charthead { display: flex; align-items: center; height: 19px; flex: none; box-sizing: border-box; margin-right: 3px; padding: 0 3px 0 2px; background: #bfccda; border: solid #6c6c6c; border-width: 1px 0 1px; gap: 2px; }
.charthead p { flex: 1; margin: 0; color: #555; font: 11px/16px "Open Sans", sans-serif; white-space: nowrap; }
.charthead b { font-weight: 400; color: #00f; }
.charthead em { font-style: normal; color: #000; }
.box { width: 15px; height: 11px; box-sizing: border-box; border: 1px solid #000; border-top-width: 2px; background: #fff; }
.charthead button { width: 14px; height: 13px; display: grid; place-items: center; background: #f0f0f0; border: 1px solid #fff; border-right-color: #666; border-bottom-color: #666; margin-left: 1px; }
.charthead svg { width: 10px; height: 10px; }
.plotrow { display: flex; flex: 1; min-height: 0; margin-right: 3px; background: #fff; border-top: 1px solid #777; box-sizing: border-box; }
.plot { flex: 1; min-width: 0; width: 100%; height: 100%; border-bottom: 1px solid #000; box-sizing: border-box; }
.prices { position: relative; width: 49px; flex: none; }
.prices svg { width: 100%; height: 100%; }
.prices ol { position: absolute; inset: 5px 4px 9px 2px; margin: 0; padding: 0; list-style: none; display: flex; flex-direction: column; justify-content: space-between; font: 12px/14px "Liberation Sans", Arial, sans-serif; text-align: right; color: #1c1c1c; }
.prices li { flex: 0 1 14px; min-height: 0; }
.prices .last { color: #f00; background: #fff; font-size: 11px; line-height: 12px; margin-right: -4px; position: relative; }
.mult { position: absolute; left: 2px; bottom: 0; padding: 0 1px; background: #fff; border: 1px solid #000; font: 9px/11px "Liberation Sans", Arial, sans-serif; }
.daterow { display: flex; height: 20px; flex: none; margin-right: 3px; }
.dates { position: relative; display: flex; flex: 1; background: #fff; overflow: hidden; }
.dates svg { position: absolute; inset: 0; width: 100%; height: 6px; }
.dates span { flex: 1 1 0; width: 0; box-sizing: border-box; box-shadow: inset 1px 0 #000; padding-top: 4px; text-indent: 2px; font: 12px/16px "Liberation Sans", Arial, sans-serif; white-space: nowrap; }
.dates span:nth-of-type(1) { box-shadow: none; }
.smile { width: 45px; flex: none; margin: 3px 0 2px 3px; border: 1px solid #aaa; border-right-color: #fff; border-bottom-color: #fff; box-sizing: border-box; display: grid; place-items: center; }
.smile svg { width: 12px; height: 12px; }
.scroll { display: flex; align-items: center; height: 19px; flex: none; margin-right: -5px; }
.scroll button { width: 17px; height: 17px; display: grid; place-items: center; flex: none; }
.scroll > button:first-child { width: 14px; }
.scroll svg { width: 8px; height: 8px; }
.scroll .sm { width: 16px; height: 16px; }
.scroll .sep { height: 16px; margin: 0 3px 0 2px; }
.track { flex: 1; display: flex; justify-content: flex-end; height: 16px; background: #ebebeb; }
.thumb { width: 69%; height: 14px; margin-top: 1px; display: flex; align-items: center; justify-content: center; gap: 2px; border: 1px solid #a2a2a2; border-radius: 2px; box-sizing: border-box; background: linear-gradient(#f4f4f4, #e6e6e6 45%, #cfcfcf 50%, #dadada); }
.thumb i { width: 1px; height: 6px; background: #555; }

.bottom { height: 31px; }
.bottom .sep { margin: 0 3px; }
.bottom .end { margin: 0 2px 0 8px; }
.bottom .near { margin-left: 5px; }
.rule { position: absolute; height: 2px; pointer-events: none; }
.line1 { width: 130px; }
.line1 .rule { left: 15px; width: 82px; }
.line2 { width: 98px; }
.line2 .rule { left: 12px; width: 70px; }
.palette { display: grid; grid-template-columns: repeat(8, 10px); row-gap: 1px; }
.palette button { width: 10px; height: 10px; border: 1px solid #999; }
.palette .on { border: 1px dashed #fff; outline: 1px solid #999; }
.tools > .more { width: 12px; }
.tools > .more svg { width: 8px; height: 5px; }
.symbol { width: 63px; height: 20px; padding: 0 2px; border: 1px solid #888; border-right-color: #fff; border-bottom-color: #fff; background: #f0f0f0; font: 11px/14px "Liberation Sans", Arial, sans-serif; }
.glossy { border: 1px solid #7a7a7a; border-radius: 3px; background: linear-gradient(#f4f4f4, #ebebeb 48%, #dcdcdc 50%, #d0d0d0); }
.glossy select { font-size: 11px; }
.exch { width: 80px; }
.vendor { width: 150px; }
.tools > .trade { width: 63px; height: 20px; border: 1px solid #adb2b5; border-radius: 3px; background: #f4f4f4; color: #838383; font: 11px/16px "Liberation Sans", Arial, sans-serif; }

.status { display: flex; align-items: stretch; height: 18px; flex: none; background: #f1eded; border-top: 1px solid #fff; box-sizing: border-box; font: 11px/16px "Open Sans", sans-serif; }
.status span { box-sizing: border-box; text-align: center; border-left: 1px solid #d0cccc; white-space: nowrap; }
.status .msg { flex: 1; padding-left: 2px; text-align: left; border: 0; }
.c1 { width: 56px; } .c2 { width: 71px; } .c3 { width: 23px; } .c4 { width: 41px; } .c5 { width: 24px; color: #008000; font-weight: 700; } .c6 { width: 37px; }

.taskbar { display: flex; align-items: center; height: 39px; flex: none; box-sizing: border-box; border-top: 1px solid #6d8298; background: linear-gradient(#7890a455, #fff0 5px), radial-gradient(ellipse 60px 60px at 730px 24px, #263a4c, transparent), linear-gradient(90deg, #24303e, #1a2836 200px, #10161f 600px, #0a0e14 1000px, #080b10); }
.orb { width: 54px; height: 38px; display: grid; place-items: center; }
.orb svg { width: 38px; height: 38px; }
.dots { width: 8px; height: 30px; margin: 0 4px; background: radial-gradient(#56616d 1px, transparent 1px) 0 0 / 3px 4px; }
.first { margin-right: 8px; }
.task { width: 58px; height: 38px; margin: 0 2px; display: grid; place-items: center; border-radius: 3px; box-sizing: border-box; }
.task svg { width: 32px; height: 32px; overflow: visible; }
.active { border: 1px solid #a9b2bc; background: linear-gradient(135deg, #8d969f, #4d5863 50%, #39434e 52%, #5a6570); }
.task:nth-of-type(10) { background: linear-gradient(135deg, #d3d6d9, #8d9297 50%, #6f757b 52%, #a0a5aa); }
.tray { display: flex; align-items: center; margin-left: auto; color: #fff; height: 38px; }
.tray svg { width: 16px; height: 16px; margin-right: 8px; }
.lang { width: 38px; padding-left: 7px; box-sizing: border-box; margin-bottom: 4px; font: 12px/16px "Open Sans", sans-serif; }
.tray time { width: 70px; text-align: center; font: 11px/17px "Open Sans", sans-serif; margin-left: 2px; margin-right: 4px; }
.peek { width: 14px; height: 38px; border: 1px solid #6d7680; background: linear-gradient(#7a838c, #1a1f26 60%); }
</style>
